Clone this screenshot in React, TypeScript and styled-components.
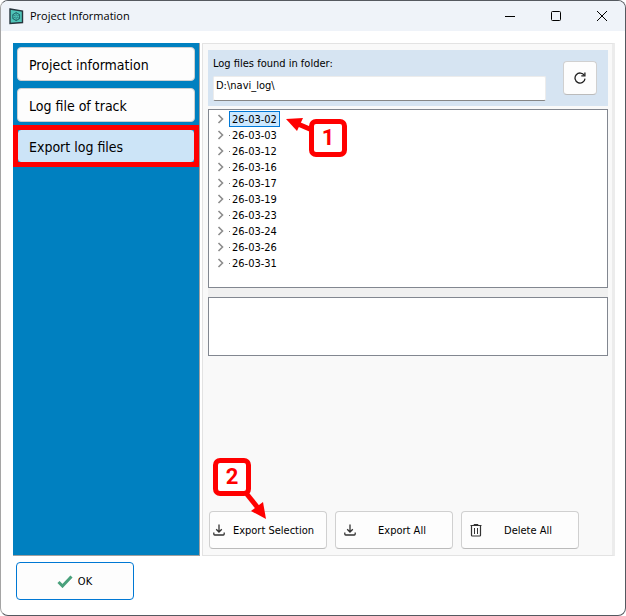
import React, { useState } from "react";
import styled, { createGlobalStyle, css } from "styled-components";

const GlobalStyle = createGlobalStyle`
  *, *::before, *::after { box-sizing: border-box; }
  body {
    margin: 0;
    background: #fff;
    color: #000;
    font: 11px/16px Tahoma, "DejaVu Sans Condensed", "Noto Sans", sans-serif;
  }
  button, input { font: inherit; color: inherit; }
  svg { display: block; flex: none; }
`;

const Window = styled.div`
  display: flex;
  flex-direction: column;
  min-height: 100vh;
  overflow: hidden;
  border: 1px solid #555960;
  border-left-color: #a5a5a5;
  border-radius: 8px;
  background: #fff;
`;

const TitleBar = styled.header`
  display: flex;
  align-items: center;
  height: 30px;
  padding-left: 8px;
  background: #eff3f9;
`;

const Title = styled.h1`
  flex: 1;
  margin: 0 0 0 6px;
  font: 400 11px/16px "Segoe UI", "Open Sans", "Noto Sans", sans-serif;
`;

const CaptionButton = styled.button`
  display: grid;
  place-items: center;
  width: 46px;
  height: 30px;
  padding: 0;
  border: 0;
  background: transparent;
`;

const Content = styled.main`
  display: flex;
  flex: 1;
  gap: 2px;
  padding: 12px 10px 0 12px;
`;

const Sidebar = styled.nav`
  display: flex;
  flex-direction: column;
  gap: 7px;
  width: 187px;
  padding: 4px;
  border-right: 1px solid #a0a0a0;
  border-bottom: 1px solid #a0a0a0;
  background: #0080c0;
`;

const NavButton = styled.button<{ $current: boolean }>`
  position: relative;
  height: 34px;
  padding: 2px 11px 0;
  border: 1px solid #d0d0d0;
  border-radius: 4px;
  background: #fdfdfd;
  font-size: 14px;
  line-height: 20px;
  text-align: left;
  white-space: nowrap;
  ${(p) =>
    p.$current &&
    css`
      border-color: #0080c0;
      background: #cce4f7;

      &::after {
        content: "";
        position: absolute;
        inset: -5px;
        border: 5px solid #f00;
      }
    `}
`;

const Panel = styled.section`
  display: flex;
  flex: 1;
  flex-direction: column;
  min-width: 0;
  padding: 6px 4px 6px 5px;
  border: 1px solid #e3e3e3;
  border-right: 3px solid #ececec;
  background: #f9f9f9;
`;

const FolderBar = styled.div`
  display: flex;
  align-items: center;
  justify-content: space-between;
  gap: 16px;
  height: 56px;
  padding: 0 11px 0 5px;
  background: #d6e4f2;
`;

const FolderField = styled.label`
  display: flex;
  flex: 1;
  flex-direction: column;
  gap: 4px;
  max-width: 333px;
`;

const FolderInput = styled.input`
  width: 100%;
  height: 25px;
  padding: 0 2px 6px;
  border: 1px solid #ececec;
  border-bottom-color: #868686;
  border-radius: 2px;
  background: #fff;
  outline: 0;
`;

const RefreshButton = styled.button`
  display: grid;
  place-items: center;
  width: 34px;
  height: 34px;
  padding: 0;
  border: 1px solid #d0d0d0;
  border-bottom-color: #bbb;
  border-radius: 4px;
  background: #fdfdfd;
`;

const Tree = styled.ul`
  flex: 1;
  height: 179px;
  margin: 3px 0 0;
  padding: 1px 8px;
  border: 1px solid #828790;
  background: #fff;
  list-style: none;
`;

const TreeItem = styled.li`
  display: flex;
  align-items: center;
  height: 16px;
`;

const TreeDot = styled.span`
  width: 1px;
  height: 1px;
  margin-left: 4px;
  background: #777;
`;

const TreeLabel = styled.button<{ $selected: boolean }>`
  height: 16px;
  margin-left: -1px;
  padding: 1px 2px 0;
  border: 1px solid ${(p) => (p.$selected ? "#0078d7" : "transparent")};
  background: ${(p) => (p.$selected ? "#cce8ff" : "transparent")};
  line-height: 14px;
`;

const Splitter = styled.div`
  height: 9px;
  background: #f0f0f0;
`;

const Details = styled.div`
  height: 59px;
  border: 1px solid #828790;
  background: #fff;
`;

const Actions = styled.div`
  display: flex;
  gap: 8px;
  margin-top: auto;
  padding-left: 1px;
`;

const PushButton = styled.button<{ $inset?: boolean }>`
  display: flex;
  align-items: center;
  width: 118px;
  height: 38px;
  padding: 0 4px 0 ${(p) => (p.$inset ? 8 : 3)}px;
  border: 1px solid #d0d0d0;
  border-bottom-color: #bbb;
  border-radius: 4px;
  background: #fdfdfd;
  white-space: nowrap;
`;

const ActionLabel = styled.span`
  flex: 1;
  padding-top: 2px;
  text-align: center;
`;

const OkButton = styled(PushButton)`
  justify-content: center;
  gap: 5px;
  border-color: #0078d4;
`;

const OkLabel = styled.span`
  padding-top: 2px;
`;

const Footer = styled.footer`
  padding: 6px 15px 15px;
`;

const Anchor = styled.div`
  position: relative;
  display: flex;
`;

const Callout = styled.div<{ $left: number; $top: number }>`
  position: absolute;
  z-index: 1;
  left: ${(p) => p.$left}px;
  top: ${(p) => p.$top}px;
  display: grid;
  place-items: center;
  width: 38px;
  height: 38px;
  border: 5px solid #f00;
  border-radius: 7px;
  background: #fff;
  color: #f00;
  font: 700 22px/24px Roboto, Arial, sans-serif;
  pointer-events: none;
`;

const Arrow = styled.svg<{ $left: number; $top: number }>`
  position: absolute;
  z-index: 1;
  left: ${(p) => p.$left}px;
  top: ${(p) => p.$top}px;
  pointer-events: none;
`;

const AppIcon = () => (
  <svg width="15" height="17" viewBox="0 0 15 17" aria-hidden="true">
    <path d="M1 1 L13.5 3 V14.5 L1 15.5 Z" fill="#4fc4b8" stroke="#26343c" strokeWidth="1.4" />
    <g fill="none" stroke="#1d5a60" strokeWidth=".9">
      <path d="M7.2 4.6l3.4 2v4l-3.4 2-3.4-2v-4z" />
      <path d="M3.8 6.6l6.8 4M10.6 6.6l-6.8 4M7.2 4.6v8" strokeWidth=".6" />
    </g>
    <circle cx="7.2" cy="8.6" r="1" fill="#4fc4b8" />
  </svg>
);

const DownloadIcon = () => (
  <svg width="12" height="12" viewBox="0 0 12 12" fill="none" stroke="#333" aria-hidden="true">
    <path d="M6 .5V8M3.2 5.2L6 8l2.8-2.8" strokeWidth="1.3" />
    <path d="M.8 8.5v1.6q0 .9.9.9h8.6q.9 0 .9-.9V8.5" strokeWidth="1.3" />
  </svg>
);

const TrashIcon = () => (
  <svg width="12" height="13" viewBox="0 0 12 13" fill="none" stroke="#333" aria-hidden="true">
    <path d="M.5 1.5h11M4 1V.5h4V1" />
    <path d="M1.5 2v9.2q0 .8.8.8h7.4q.8 0 .8-.8V2" strokeWidth="1.2" />
    <path d="M4.5 4v6M7.5 4v6" />
  </svg>
);

const RefreshIcon = () => (
  <svg width="12" height="12" viewBox="0 0 12 12" fill="none" stroke="#222" strokeWidth="1.3" aria-hidden="true">
    <path d="M10.3 3.4A5 5 0 1 0 11 6.6" />
    <path d="M10.9.5v3.4H7.3" />
  </svg>
);

const Chevron = () => (
  <svg width="8" height="10" viewBox="0 0 8 10" fill="none" stroke="#8c8c8c" strokeWidth="1.6" aria-hidden="true">
    <path d="M1.5 1l4 4-4 4" />
  </svg>
);

const CheckIcon = () => (
  <svg width="16" height="13" viewBox="0 0 16 13" aria-hidden="true">
    <path d="M1.5 7l4 4L14.5 1.5" fill="none" stroke="#4aa17c" strokeWidth="3" />
  </svg>
);

const sections = ["Project information", "Log file of track", "Export log files"];
const folders = [
  "26-03-02", "26-03-03", "26-03-12", "26-03-16", "26-03-17",
  "26-03-19", "26-03-23", "26-03-24", "26-03-26", "26-03-31",
];

export default function App() {
  const [section, setSection] = useState(sections[2]);
  const [selected, setSelected] = useState(folders[0]);
  const [folder, setFolder] = useState("D:\\navi_log\\");

  return (
    <>
      <GlobalStyle />
      <Window>
        <TitleBar>
          <AppIcon />
          <Title>Project Information</Title>
          <CaptionButton aria-label="Minimize">
            <svg width="10" height="10"><path d="M0 5.5h10" stroke="#000" /></svg>
          </CaptionButton>
          <CaptionButton aria-label="Maximize">
            <svg width="10" height="10"><rect x=".5" y=".5" width="9" height="9" rx="1" fill="none" stroke="#000" /></svg>
          </CaptionButton>
          <CaptionButton aria-label="Close">
            <svg width="10" height="10"><path d="M0 0l10 10M10 0L0 10" stroke="#000" /></svg>
          </CaptionButton>
        </TitleBar>
        <Content>
          <Sidebar>
            {sections.map((name) => (
              <NavButton key={name} $current={name === section} onClick={() => setSection(name)}>
                {name}
              </NavButton>
            ))}
          </Sidebar>
          <Panel>
            <FolderBar>
              <FolderField>
                Log files found in folder:
                <FolderInput value={folder} onChange={(e) => setFolder(e.target.value)} />
              </FolderField>
              <RefreshButton aria-label="Refresh"><RefreshIcon /></RefreshButton>
            </FolderBar>
            <Anchor>
              <Tree>
                {folders.map((name) => (
                  <TreeItem key={name}>
                    <Chevron />
                    <TreeDot />
                    <TreeLabel $selected={name === selected} onClick={() => setSelected(name)}>
                      {name}
                    </TreeLabel>
                  </TreeItem>
                ))}
              </Tree>
              <Arrow $left={78} $top={12} width="28" height="18" viewBox="0 0 28 18" aria-hidden="true">
                <path d="M12 6l14 6" stroke="#f00" strokeWidth="5" />
                <path d="M0 1L17 0 11 13Z" fill="#f00" />
              </Arrow>
              <Callout $left={101} $top={13}>1</Callout>
            </Anchor>
            <Splitter />
            <Details />
            <Actions>
              <Anchor>
                <PushButton>
                  <DownloadIcon />
                  <ActionLabel>Export Selection</ActionLabel>
                </PushButton>
                <Arrow $left={32} $top={-22} width="28" height="32" viewBox="0 0 28 32" aria-hidden="true">
                  <path d="M5 4l12 15" stroke="#f00" strokeWidth="5" />
                  <path d="M25 30L10 22 22 13Z" fill="#f00" />
                </Arrow>
                <Callout $left={4} $top={-53}>2</Callout>
              </Anchor>
              <PushButton $inset>
                <DownloadIcon />
                <ActionLabel>Export All</ActionLabel>
              </PushButton>
              <PushButton $inset>
                <TrashIcon />
                <ActionLabel>Delete All</ActionLabel>
              </PushButton>
            </Actions>
          </Panel>
        </Content>
        <Footer>
          <OkButton><CheckIcon /><OkLabel>OK</OkLabel></OkButton>
        </Footer>
      </Window>
    </>
  );
}
